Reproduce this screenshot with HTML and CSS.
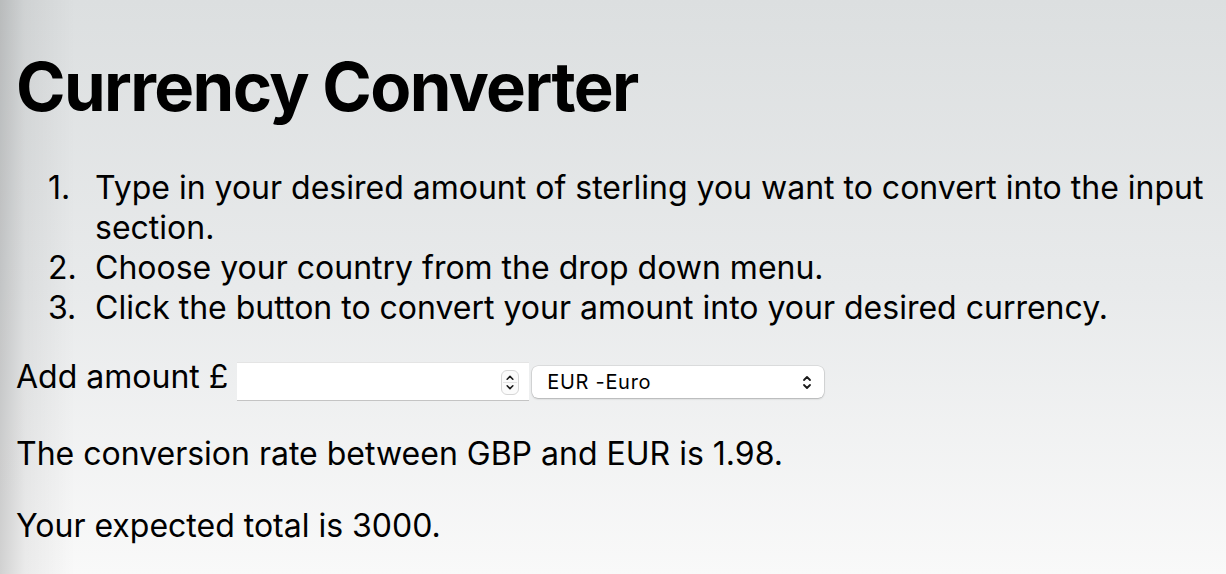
FILE: index.html
```html
<!DOCTYPE html>
<html lang="en">
<head>
<meta charset="utf-8">
<title>Currency Converter</title>
<link rel="stylesheet" href="styles.css">
</head>
<body>
<main class="page">
  <h1 class="title">Currency Converter</h1>
  <ol class="steps">
    <li>Type in your desired amount of sterling you want to convert into the input section.</li>
    <li>Choose your country from the drop down menu.</li>
    <li>Click the button to convert your amount into your desired currency.</li>
  </ol>
  <div class="form-row">
    <label class="amount-label" for="amount">Add amount £</label>
    <div class="number-input">
      <input id="amount" type="text" class="amount">
      <span class="spinner">
        <svg width="17" height="25" viewBox="0 0 17 25"><path d="M5.5 9 L8.5 6 L11.5 9" fill="none" stroke="#1a1a1a" stroke-width="1.7" stroke-linecap="round" stroke-linejoin="round"/><line x1="1" y1="12.5" x2="16" y2="12.5" stroke="#e2e2e2" stroke-width="1"/><path d="M5.5 16 L8.5 19 L11.5 16" fill="none" stroke="#1a1a1a" stroke-width="1.7" stroke-linecap="round" stroke-linejoin="round"/></svg>
      </span>
    </div>
    <div class="select">
      <span class="select-text">EUR -Euro</span>
      <svg class="select-arrows" width="10" height="17" viewBox="0 0 10 17"><path d="M2 6 L5 3 L8 6" fill="none" stroke="#1a1a1a" stroke-width="1.8" stroke-linecap="round" stroke-linejoin="round"/><path d="M2 11 L5 14 L8 11" fill="none" stroke="#1a1a1a" stroke-width="1.8" stroke-linecap="round" stroke-linejoin="round"/></svg>
    </div>
  </div>
  <p class="result">The conversion rate between GBP and EUR is 1.98.</p>
  <p class="result">Your expected total is 3000.</p>
</main>
</body>
</html>
```

FILE: styles.css
```css
html, body {
  margin: 0;
  padding: 0;
  height: 100%;
}

body {
  font-family: Inter, "Liberation Sans", sans-serif;
  color: #000;
  background:
    linear-gradient(to right, rgba(0, 0, 0, 0.16) 0px, rgba(0, 0, 0, 0.06) 25px, rgba(0, 0, 0, 0) 75px),
    linear-gradient(to bottom, #dcdfe0 0%, #e8eaeb 50%, #f9f9f9 100%);
  overflow: hidden;
}

.page {
  padding: 0 16px;
}

.title {
  margin: 0;
  padding-top: 46px;
  font-size: 67px;
  font-weight: 700;
  line-height: 81px;
  letter-spacing: -1.6px;
}

.steps {
  margin: 41px 0 0;
  padding-left: 79px;
  font-size: 32px;
  line-height: 40px;
  list-style: none;
  counter-reset: step;
}

.steps li {
  counter-increment: step;
}

.steps li::before {
  content: counter(step) ".";
  display: inline-block;
  width: 47px;
  margin-left: -47px;
}

.form-row {
  display: flex;
  align-items: flex-start;
  margin-top: 29px;
}

.amount-label {
  font-size: 32px;
  line-height: 40px;
  margin-right: 9px;
}

.number-input {
  position: relative;
  margin-top: 5px;
  width: 292px;
  height: 39px;
  background: #fff;
  border-top: 1px solid #e4e4e4;
  border-bottom: 1px solid #c4c4c4;
  box-sizing: border-box;
}

.amount {
  border: none;
  outline: none;
  background: transparent;
  width: 100%;
  height: 100%;
  padding: 0;
}

.spinner {
  position: absolute;
  left: 264px;
  top: 7px;
  width: 18px;
  height: 25px;
  border: 1px solid #d6d6d6;
  border-radius: 6px;
  box-sizing: border-box;
  display: flex;
  align-items: center;
  justify-content: center;
  background: #fbfbfb;
  overflow: hidden;
}

.select {
  margin-left: 3px;
  margin-top: 9px;
  width: 292px;
  height: 32px;
  box-sizing: border-box;
  background: #fff;
  border-radius: 6px;
  box-shadow: 0 0 0 0.5px rgba(0, 0, 0, 0.14), 0 1px 2px rgba(0, 0, 0, 0.2);
  display: flex;
  align-items: center;
  justify-content: space-between;
  padding: 0 12px 0 15px;
  font-size: 20px;
  letter-spacing: 0.7px;
}

.select-arrows {
  display: block;
}

.result {
  margin: 33px 0 0;
  font-size: 32px;
  line-height: 40px;
}

.result + .result {
  margin-top: 32px;
}
```
